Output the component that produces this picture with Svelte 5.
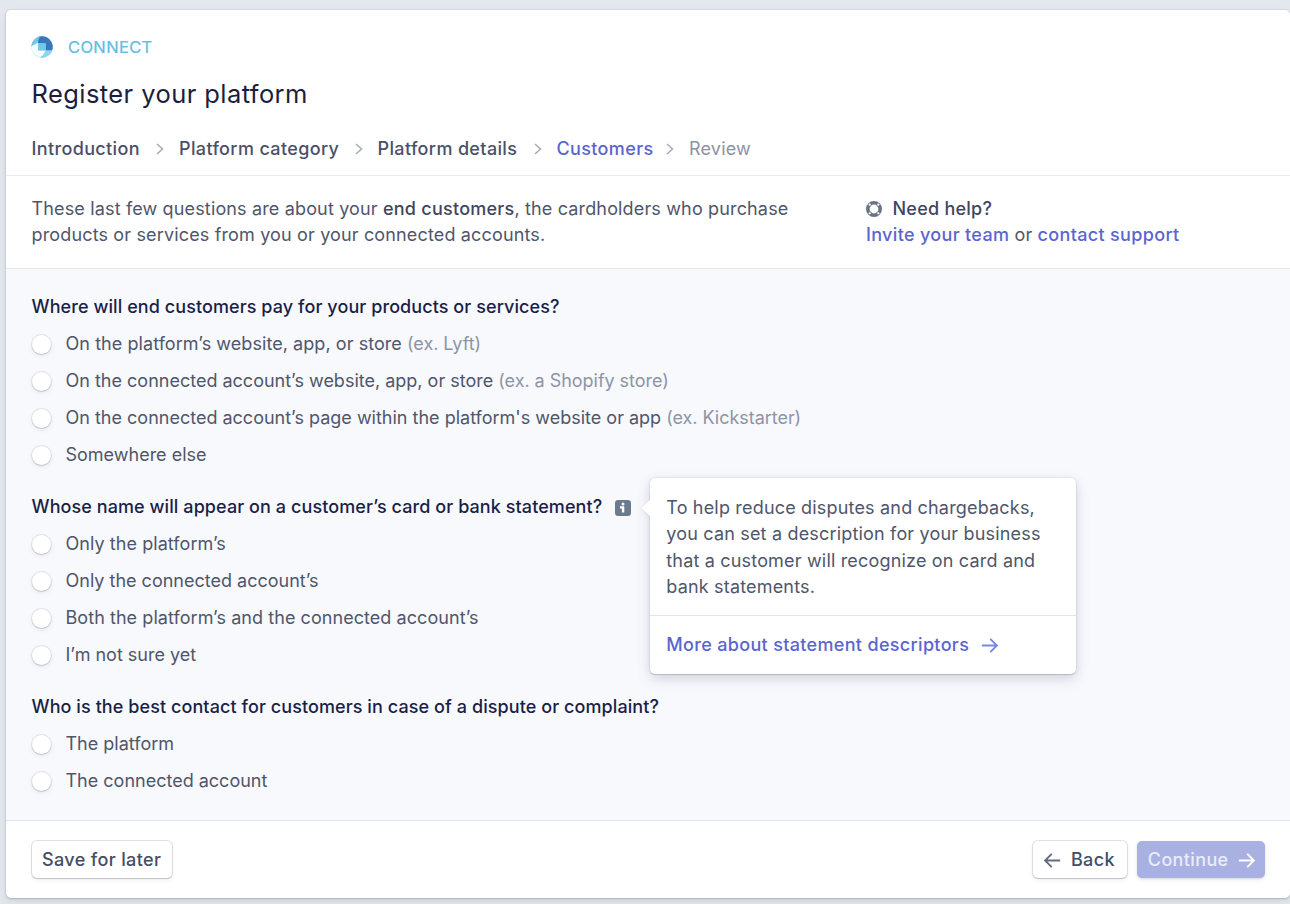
<script>
  const steps = [
    { name: 'Introduction', state: 'done', width: 147.5 },
    { name: 'Platform category', state: 'done', width: 198.5 },
    { name: 'Platform details', state: 'done', width: 179 },
    { name: 'Customers', state: 'current', width: 132.5 },
    { name: 'Review', state: 'next' }
  ];
  const questions = [
    {
      id: 'location',
      title: 'Where will end customers pay for your products or services?',
      options: [
        { label: 'On the platform’s website, app, or store', example: '(ex. Lyft)', roomy: true },
        { label: 'On the connected account’s website, app, or store', example: '(ex. a Shopify store)' },
        { label: "On the connected account’s page within the platform's website or app", example: '(ex. Kickstarter)' },
        { label: 'Somewhere else' }
      ]
    },
    {
      id: 'statement',
      title: 'Whose name will appear on a customer’s card or bank statement?',
      info: true,
      options: [
        { label: 'Only the platform’s', roomy: true },
        { label: 'Only the connected account’s' },
        { label: 'Both the platform’s and the connected account’s', roomy: true },
        { label: 'I’m not sure yet' }
      ]
    },
    {
      id: 'contact',
      title: 'Who is the best contact for customers in case of a dispute or complaint?',
      options: [{ label: 'The platform' }, { label: 'The connected account' }]
    }
  ];
</script>

{#snippet arrow()}
  <svg class="arrow" viewBox="0 0 16 16"><path d="M.8 8h14M8.700 1.700 15 8l-6.300 6.300" /></svg>
{/snippet}

<main class="card">
  <header>
    <div class="brand">
      <svg class="logo" viewBox="0 0 22 22">
        <defs><clipPath id="disc"><circle cx="11" cy="11" r="10.700" /></clipPath></defs>
        <g clip-path="url(#disc)">
          <rect width="22" height="22" fill="#7fcfeb" />
          <path d="M0 6.500 7.200 14.500H15L9 22H0Z" fill="#e6f9fd" />
          <path d="M0 13.500V10.500L7.200 6.800v7.700H15L12.500 20C8 20 3 19 0 13.500Z" fill="#f7feff" />
          <path d="M7 0H22V14.500H14.700V7.200H7Z" fill="#3a76ba" />
          <path d="M0 0H9L7.300 4.500 0 11Z" fill="#72c6e5" />
          <path d="M22 14.500H14.700L10 22H22Z" fill="#8bd7ef" />
          <rect x="7.200" y="7.200" width="7.500" height="7.300" fill="#70c9e9" />
        </g>
      </svg>
      <span>CONNECT</span>
    </div>
    <h1>Register your platform</h1>
    <nav>
      {#each steps as step, i}
        <div class="step" style:width={step.width ? step.width + 'px' : 'auto'}>
          <span class={step.state}>{step.name}</span>
          {#if i < steps.length - 1}
            <svg class="chevron" viewBox="0 0 8 12"><path d="m1 1 5.500 5L1 11" /></svg>
          {/if}
        </div>
      {/each}
    </nav>
  </header>

  <section class="intro">
    <p>These last few questions are about your <strong>end customers</strong>, the cardholders who purchase<br />products or services from you or your connected accounts.</p>
    <div class="help">
      <div class="help-title">
        <svg viewBox="0 0 16 16">
          <circle cx="8" cy="8" r="6.200" fill="none" stroke="#697386" stroke-width="3.600" />
          <g fill="#fff"><circle cx="3.700" cy="3.700" r="1.150" /><circle cx="12.300" cy="3.700" r="1.150" /><circle cx="3.700" cy="12.300" r="1.150" /><circle cx="12.300" cy="12.300" r="1.150" /></g>
        </svg>
        <strong>Need help?</strong>
      </div>
      <div><a href="#invite">Invite your team</a> or <a href="#support">contact support</a></div>
    </div>
  </section>

  <form>
    {#each questions as q}
      <section class="question">
        <h2>
          <span>{q.title}</span>
          {#if q.info}
            <span class="info">
              <svg viewBox="0 0 16 16">
                <rect width="16" height="16" rx="3.300" fill="#6c7a8e" />
                <circle cx="8" cy="3.900" r="1.500" fill="#fff" />
                <path d="M5 6.300h4.300v6.300H6.900V8.400H5Z" fill="#fff" />
              </svg>
              <div class="popover">
                <svg class="beak" viewBox="0 0 10 20"><path d="M10 0v1L1.200 9.300q-.7.700 0 1.400L10 19v1Z" fill="#fff" /></svg>
                <p>To help reduce disputes and chargebacks,<br />you can set a description for your business<br />that a customer will recognize on card and<br />bank statements.</p>
                <a href="#descriptors">More about statement descriptors {@render arrow()}</a>
              </div>
            </span>
          {/if}
        </h2>
        {#each q.options as option}
          <label>
            <input type="radio" name={q.id} />
            <span class:roomy={option.roomy}>{option.label} {#if option.example}<em>{option.example}</em>{/if}</span>
          </label>
        {/each}
      </section>
    {/each}
  </form>

  <footer>
    <button type="button">Save for later</button>
    <div class="actions">
      <button type="button" class="back">{@render arrow()}Back</button>
      <button type="button" class="primary">Continue{@render arrow()}</button>
    </div>
  </footer>
</main>

<style>
  :global(body) {
    background: #e3e8ee;
    overflow: hidden;
  }
  .card {
    box-sizing: border-box;
    width: 1284.500px;
    height: 888px;
    margin: 10px 0 6px 5.500px;
    display: flex;
    flex-direction: column;
    background: #fff;
    border-radius: 5px;
    box-shadow: 0 0 0 1px rgba(60, 66, 87, 0.06), 0 1px 2px rgba(60, 66, 87, 0.2), 0 4px 9px rgba(60, 66, 87, 0.1);
    font: 400 18px/26.400px Inter, 'Liberation Sans', sans-serif;
    color: #4f566b;
    white-space: nowrap;
  }
  h1, h2, p { margin: 0; }
  a { color: #5b65d0; font-weight: 500; letter-spacing: 0.33px; text-decoration: none; }
  strong { font-weight: 500; letter-spacing: 0.25px; color: #3f465e; }
  header {
    box-sizing: border-box;
    height: 166px;
    padding: 24px 26px 0;
    border-bottom: 1.500px solid #e8ebf2;
  }
  .brand {
    display: flex;
    align-items: center;
    gap: 15px;
    height: 26px;
    font-size: 16.500px;
    letter-spacing: 0.35px;
    color: #5dbde2;
    -webkit-text-stroke: 0.200px #5dbde2;
  }
  .logo { width: 22px; height: 22px; margin: -1px 0 0 -0.500px; }
  h1 {
    margin-top: 16px;
    font-size: 25.500px;
    line-height: 36px;
    font-weight: 400;
    letter-spacing: 0.42px;
    color: #1c1e3d;
  }
  nav { display: flex; margin-top: 24px; }
  .step {
    display: flex;
    align-items: center;
    justify-content: space-between;
    box-sizing: border-box;
    padding-right: 15px;
    font-weight: 500;
    letter-spacing: 0.36px;
  }
  .chevron {
    width: 8px;
    height: 12px;
    flex: none;
    fill: none;
    stroke: #a3acb9;
    stroke-width: 1.500;
  }
  .done { color: #4a5068; }
  .current { color: #5b65d0; }
  .next { color: #8b93a3; font-weight: 400; letter-spacing: 0.2px; }
  .intro {
    box-sizing: border-box;
    height: 93px;
    padding: 20px 26px 0;
    display: grid;
    grid-template-columns: 834.500px 1fr;
    letter-spacing: 0.15px;
    border-bottom: 1.500px solid #e3e7ef;
  }
  .help-title { display: flex; align-items: center; gap: 10.500px; }
  .help-title svg { width: 16px; height: 16px; }
  form {
    flex: 1;
    display: flex;
    flex-direction: column;
    gap: 15px;
    padding: 20px 26px 0;
    background: #f7f9fd;
  }
  .question { display: flex; flex-direction: column; }
  h2 {
    display: flex;
    align-items: center;
    gap: 12.500px;
    height: 37px;
    font-size: 18px;
    font-weight: 550;
    letter-spacing: 0.08px;
    color: #1a1f47;
  }
  .info { position: relative; width: 16px; height: 16px; display: flex; }
  .info > svg { width: 16px; height: 16px; }
  label { display: flex; align-items: center; gap: 15px; height: 37px; }
  .roomy { letter-spacing: 0.06px; }
  input {
    appearance: none;
    width: 19px;
    height: 19px;
    margin: 0;
    border-radius: 50%;
    background: #fff;
    box-shadow: 0 0 0 1px rgba(60, 66, 87, 0.1), 0 1px 1px rgba(0, 0, 0, 0.1), 0 2px 5px rgba(60, 66, 87, 0.1);
  }
  em { font-style: normal; color: #8d95a5; letter-spacing: -0.04px; }
  .popover {
    position: absolute;
    left: 35.500px;
    top: -21.500px;
    width: 426px;
    height: 196px;
    border-radius: 5px;
    background: #fff;
    color: #4f566b;
    font-weight: 400;
    letter-spacing: 0.18px;
    box-shadow: 0 0 0 1px rgba(60, 66, 87, 0.06), 0 1px 1px rgba(0, 0, 0, 0.13), 0 5px 15px rgba(60, 66, 87, 0.14), 0 3px 9px rgba(60, 66, 87, 0.08);
  }
  .beak { position: absolute; left: -9px; top: 20px; width: 10px; height: 20px; filter: drop-shadow(-1px 1px 1px rgba(60, 66, 87, 0.07)); }
  .popover p { padding: 17px 16px 14.500px; border-bottom: 1px solid #e0e5ec; }
  .popover a { display: flex; align-items: center; gap: 12px; height: 59px; padding: 0 16px; }
  .arrow { width: 17px; height: 17px; flex: none; fill: none; stroke: #7887e3; stroke-width: 1.800; }
  footer {
    box-sizing: border-box;
    height: 78px;
    padding: 0 25px 0 26px;
    display: flex;
    align-items: center;
    justify-content: space-between;
    border-top: 1.500px solid #e1e5ee;
  }
  .actions { display: flex; gap: 10.500px; }
  button {
    height: 37px;
    padding: 1px 10.500px 0;
    display: flex;
    align-items: center;
    gap: 10px;
    border: 0;
    border-radius: 5px;
    background: #fff;
    color: #454d66;
    font: inherit;
    font-weight: 500;
    letter-spacing: 0.36px;
    box-shadow: 0 0 0 1px rgba(60, 66, 87, 0.14), 0 1px 1px rgba(0, 0, 0, 0.12), 0 2px 5px rgba(60, 66, 87, 0.08);
  }
  .back { padding-right: 12px; }
  .back .arrow { stroke: #626b80; transform: scaleX(-1); }
  .primary { gap: 9.500px; padding-right: 10px; background: #a9b1e3; color: #e9ecfb; box-shadow: 0 1px 2px rgba(60, 66, 87, 0.14), 0 2px 5px rgba(60, 66, 87, 0.08); }
  .primary .arrow { stroke: #fff; }
</style>
